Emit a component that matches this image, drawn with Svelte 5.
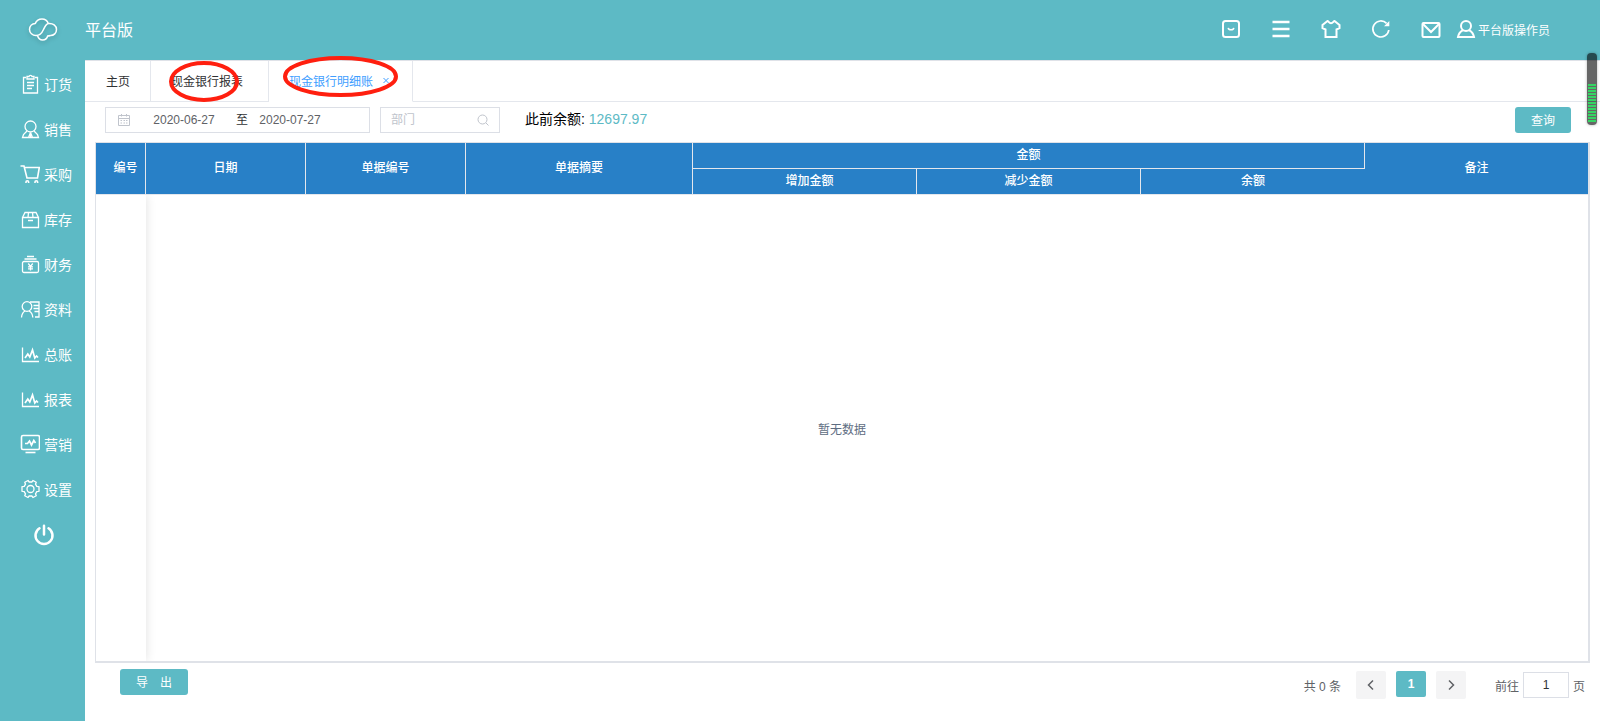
<script>
	const menu = [
		{ name: '订货', icon: 'order' },
		{ name: '销售', icon: 'sale' },
		{ name: '采购', icon: 'cart' },
		{ name: '库存', icon: 'stock' },
		{ name: '财务', icon: 'finance' },
		{ name: '资料', icon: 'profile' },
		{ name: '总账', icon: 'chart' },
		{ name: '报表', icon: 'chart' },
		{ name: '营销', icon: 'screen' },
		{ name: '设置', icon: 'gear' }
	]
	const bars = Array.from({ length: 13 }, (_, i) => i)

	let startDate = '2020-06-27'
	let endDate = '2020-07-27'
	let department = ''
	let page = '1'
</script>

<div class="app">
	<header>
		<a class="logo" href="/" aria-label="首页">
			<svg width="32" height="28" viewBox="0 0 32 28">
				<path d="M9 20.500C5.500 20.500 2.500 18 2.500 14.500S5 8.600 8.300 8.400C9.500 5.500 12 4 15 4s5.300 1.700 6.300 4.500C26 8 29.500 10.500 29.500 14.500c0 3.600-2.700 6-6 6M9 20.500c4.500 0 6-2.500 7.500-6s2.300-5.200 4.800-6M10.500 20.500c.8 2.800 2.700 4.500 5.200 4.500 2.600 0 4.300-1.700 5-4 1 0 1.800-.2 2.800-.5" />
			</svg>
		</a>
		<span class="brand">平台版</span>
		<div class="tools">
			<button aria-label="商城">
				<svg width="20" height="20" viewBox="0 0 20 20">
					<rect x="2" y="2" width="16" height="16" rx="2.500" />
					<path d="M7.200 8.800c.4 2.600 5.200 2.600 5.600 0" stroke-width="1.500" />
				</svg>
			</button>
			<button aria-label="菜单">
				<svg width="20" height="20" viewBox="0 0 20 20">
					<path d="M1.500 3h17M1.500 10h17M1.500 17h17" stroke-width="2.500" />
				</svg>
			</button>
			<button aria-label="主题">
				<svg width="20" height="20" viewBox="0 0 20 20">
					<path d="M6.500 2 1.500 6v3.200l3 1.300V18h11v-7.500l3-1.300V6l-5-4C12.500 2 12 4.200 10 4.200S7.500 2 6.500 2z" />
				</svg>
			</button>
			<button aria-label="刷新">
				<svg width="20" height="20" viewBox="0 0 20 20">
					<path d="M17.800 11a8 8 0 1 1-2.200-6.600" stroke-width="1.700" />
					<path d="M18.300 2v5.300h-5.300z" fill="#fff" stroke="none" />
				</svg>
			</button>
			<button aria-label="消息">
				<svg width="20" height="20" viewBox="0 0 20 20">
					<rect x="1.500" y="4" width="17" height="14" rx="1" />
					<path d="m2 5 8 8 8-8" />
				</svg>
			</button>
		</div>
		<a class="user" href="/user">
			<svg width="20" height="20" viewBox="0 0 20 20">
				<circle cx="10" cy="7" r="5" />
				<path d="M7.200 11.200C4.500 12.500 2.500 15 2 18h16c-.5-3-2.500-5.500-5.200-6.800" />
			</svg>
			平台版操作员
		</a>
	</header>

	<div class="body">
		<nav class="side">
			{#each menu as item}
				<a href="/{item.icon}">
					<svg width="20" height="20" viewBox="0 0 20 20">
						{#if item.icon === 'order'}
							<path d="M6 3.500H3.500V19h14V3.500H15M7 2.500h2c.3-1.500 2.700-1.500 3 0h2v2.500H7zM7 8.500h7M7 11.500h7M7 14.500h5" />
						{:else if item.icon === 'sale'}
							<circle cx="10.500" cy="7.500" r="5.500" />
							<path d="M7 12 3.500 15.500l-1 3h16l-1-3L14 12M10.500 13.500l-2 5M10.500 13.500l2 5M10.500 13.500v5" />
						{:else if item.icon === 'cart'}
							<path d="M.5 2H4l3 12h10.500L19.300 3.500H4.500" stroke-width="1.600" />
							<path d="M6 19v-1a1.300 1.300 0 0 1 2.600 0v1M15 19v-1a1.300 1.300 0 0 1 2.600 0v1" stroke-width="1.600" />
						{:else if item.icon === 'stock'}
							<path d="M2.500 8.500h16V18.500h-16zM2.500 8.500 5 3.500h11l2.500 5M8.500 3.500l-.5 5M12.500 3.500l.5 5M8 11.500h5" />
						{:else if item.icon === 'finance'}
							<rect x="2.500" y="7.500" width="16" height="11" rx="1.500" />
							<path d="M4.500 5h12M7 2.500h7M8.300 9.500l2.200 3 2.200-3M10.500 12.500v4M8 12.800h5M8 14.800h5" />
						{:else if item.icon === 'profile'}
							<circle cx="7" cy="7.500" r="4.800" />
							<path d="M1.500 18.500c.3-3.500 1.500-5.500 3.700-6.500M9 12c2.200 1 3.500 3 3.800 6.500M10 3h9v15h-4M13.500 6.500H19M13.500 9.500H19M14.500 12.500H19" />
						{:else if item.icon === 'chart'}
							<path d="M2.500 3.500V17.500h16.500" />
							<path d="M5 14l2.800-4 2 3 2.700-7 2.300 8 1.700-2 1.500 1.500" stroke-width="1.700" />
						{:else if item.icon === 'screen'}
							<rect x="1.500" y="1.500" width="18" height="14" rx="1.500" stroke-width="1.600" />
							<path d="M5.500 18.500h10" stroke-width="1.600" />
							<path d="M5 9.500h2.500L9.500 7l2 4 2.300-4.500L15.500 9" stroke-width="1.700" />
						{:else}
							<circle cx="10.500" cy="10" r="3.500" />
							<path d="M8 1.500 9.200 3h2.600L13 1.500l3.200 1.800-.7 1.900 1.300 2.200 2.200.3v4.600l-2.200.3-1.300 2.200.7 1.900-3.200 1.800-1.200-1.500H9.200L8 18.500l-3.200-1.800.7-1.900-1.300-2.200-2.200-.3V7.700l2.200-.3 1.300-2.200-.7-1.900z" />
						{/if}
					</svg>
					{item.name}
				</a>
			{/each}
			<button class="power" aria-label="退出">
				<svg width="22" height="22" viewBox="0 0 22 22">
					<path d="M6.500 4.300a8.500 8.500 0 1 0 9 0M11 1.800v8.700" />
				</svg>
			</button>
		</nav>

		<main>
			<div class="tabs">
				<a class="tab" href="/home">主页</a>
				<a class="tab report" href="/report">
					现金银行报表
					<svg class="mark" width="70" height="41" viewBox="0 0 70 41">
						<ellipse cx="35" cy="20.500" rx="33" ry="18.500" />
					</svg>
				</a>
				<a class="tab active" href="/detail">
					现金银行明细账
					<svg class="close" width="12" height="12" viewBox="0 0 12 12">
						<path d="m3.500 4 5 5M8.500 4l-5 5" />
					</svg>
					<svg class="mark" width="115" height="41" viewBox="0 0 115 41">
						<ellipse cx="57.500" cy="20.500" rx="55.500" ry="18.500" />
					</svg>
				</a>
				<div class="rest"></div>
			</div>

			<form class="filters">
				<div class="range">
					<svg width="12" height="12" viewBox="0 0 12 12">
						<path d="M.5 1.500h11v10H.5zM.5 4.500h11M3.500 0v2.500M8.500 0v2.500M2.500 6.500h1.500M5.500 6.500h1.500M8 6.500h1.500M2.500 9h1.500M5.500 9h1.500M8 9h1.500" />
					</svg>
					<input aria-label="开始日期" bind:value={startDate} />
					<span>至</span>
					<input aria-label="结束日期" bind:value={endDate} />
				</div>
				<div class="dept">
					<input aria-label="部门" placeholder="部门" bind:value={department} />
					<svg width="12" height="12" viewBox="0 0 12 12">
						<circle cx="5.500" cy="5.500" r="4.500" />
						<path d="m9 9 2.500 2.500" />
					</svg>
				</div>
				<p>此前余额: <span>12697.97</span></p>
				<button type="button" class="btn">查询</button>
			</form>

			<section class="grid">
				<table>
					<colgroup>
						<col class="c-no" />
						<col class="c-mid" />
						<col class="c-mid" />
						<col class="c-memo" />
						<col />
						<col />
						<col />
						<col class="c-note" />
					</colgroup>
					<thead>
						<tr>
							<th rowspan="2" class="indent">编号</th>
							<th rowspan="2">日期</th>
							<th rowspan="2">单据编号</th>
							<th rowspan="2">单据摘要</th>
							<th colspan="3">金额</th>
							<th rowspan="2" class="last">备注</th>
						</tr>
						<tr>
							<th class="indent">增加金额</th>
							<th>减少金额</th>
							<th class="last">余额</th>
						</tr>
					</thead>
				</table>
				<div class="empty">
					<div class="fixed"></div>
					<p>暂无数据</p>
				</div>
			</section>

			<footer>
				<button class="btn export">导&emsp;出</button>
				<div class="pager">
					<span class="total">共 0 条</span>
					<button aria-label="上一页">
						<svg width="12" height="12" viewBox="0 0 12 12"><path d="M8 1.500 3.500 6 8 10.500" /></svg>
					</button>
					<button class="current">1</button>
					<button aria-label="下一页">
						<svg width="12" height="12" viewBox="0 0 12 12"><path d="M4 1.500 8.500 6 4 10.500" /></svg>
					</button>
					<label>前往 <input bind:value={page} /> 页</label>
				</div>
			</footer>
		</main>
	</div>

	<div class="meter">
		{#each bars as bar (bar)}
			<i></i>
		{/each}
	</div>
</div>

<style>
	:global(body) {
		margin: 0;
		font-family: 'Liberation Sans', 'Noto Sans CJK SC', sans-serif;
		font-size: 12px;
		color: #606266;
	}
	* {
		box-sizing: border-box;
	}
	a {
		color: inherit;
		text-decoration: none;
	}
	p {
		margin: 0;
	}
	button {
		padding: 0;
		border: 0;
		background: none;
		font: inherit;
		color: inherit;
		cursor: pointer;
	}
	input {
		min-width: 0;
		padding: 0;
		border: 0;
		outline: 0;
		background: none;
		font: inherit;
		color: #606266;
	}
	svg {
		display: block;
		flex: none;
		fill: none;
		stroke: currentColor;
	}
	.app {
		position: relative;
		display: flex;
		flex-direction: column;
		min-height: 100vh;
		background: #fff;
	}

	header {
		display: flex;
		align-items: center;
		height: 60px;
		padding: 0 50px 2px 0;
		background: #5dbac5;
		color: #fff;
	}
	.logo {
		display: flex;
		justify-content: center;
		width: 85px;
	}
	.logo svg {
		stroke-width: 1.5;
		filter: drop-shadow(0 2px 2px rgba(0, 0, 0, 0.2));
	}
	.brand {
		font-size: 16px;
	}
	.tools {
		display: flex;
		gap: 30px;
		margin-left: auto;
		margin-right: 15px;
	}
	.tools svg,
	.user svg {
		stroke-width: 2;
	}
	.user {
		display: flex;
		align-items: center;
		gap: 2px;
	}

	.body {
		display: flex;
		flex: 1;
	}
	.side {
		display: flex;
		flex: none;
		flex-direction: column;
		width: 85px;
		padding-top: 1px;
		background: #5dbac5;
		color: #fff;
		font-size: 14px;
	}
	.side a {
		display: flex;
		align-items: center;
		gap: 4px;
		height: 45px;
		padding-left: 20px;
	}
	.side svg {
		stroke-width: 1.3;
	}
	.power {
		display: flex;
		align-items: center;
		justify-content: center;
		height: 45px;
		padding-top: 2px;
		padding-left: 2px;
	}
	.side .power svg {
		stroke-width: 2.5;
		stroke-linecap: round;
	}

	main {
		display: flex;
		flex: 1;
		flex-direction: column;
		min-width: 0;
	}
	.tabs {
		display: flex;
		height: 42px;
		border-top: 1px solid #dfe2e8;
		color: #303133;
	}
	.tab {
		position: relative;
		display: flex;
		align-items: center;
		padding: 0 20px 2px;
		border-right: 1px solid #e4e7ed;
		border-bottom: 1px solid #e4e7ed;
	}
	.tab:first-child {
		padding-left: 21px;
	}
	.report {
		padding-right: 25px;
	}
	.active {
		gap: 7px;
		border-bottom-color: transparent;
		color: #409eff;
	}
	.mark {
		position: absolute;
		top: 0;
		left: 18px;
		z-index: 1;
		stroke: #ff1f0f;
		stroke-width: 4;
	}
	.active .mark {
		top: -5px;
		left: 14px;
	}
	.rest {
		flex: 1;
		border-bottom: 1px solid #e4e7ed;
	}

	.filters {
		display: flex;
		align-items: center;
		padding: 5px 29px 9px 20px;
	}
	.range,
	.dept {
		display: flex;
		align-items: center;
		height: 26px;
		border: 1px solid #dcdfe6;
		color: #c0c4cc;
	}
	.range {
		width: 265px;
		padding-left: 12px;
	}
	.range input {
		width: 84px;
		text-align: center;
	}
	.range svg {
		margin-right: 12px;
	}
	.range span {
		margin-left: 10px;
		line-height: 16px;
		color: #303133;
	}
	.dept {
		width: 120px;
		margin-left: 10px;
		padding: 0 10px;
	}
	.dept input {
		flex: 1;
	}
	.dept input::placeholder {
		color: #c0c4cc;
	}
	.filters p {
		margin-left: 25px;
		padding-bottom: 2px;
		font-size: 14px;
		line-height: 20px;
		color: #000;
	}
	.filters p span {
		color: #5dbac5;
	}
	.btn {
		height: 26px;
		padding: 0 16px 2px;
		border-radius: 3px;
		background: #5dbac5;
		color: #fff;
	}
	.filters .btn {
		margin-left: auto;
	}

	.grid {
		display: flex;
		flex: 1;
		flex-direction: column;
		margin: 0 10px;
		border: 1px solid #dfe2e8;
		border-width: 1px 2px 2px 1px;
	}
	table {
		width: 100%;
		table-layout: fixed;
		border-collapse: separate;
		border-spacing: 0;
		background: #2880c7;
		color: #fff;
	}
	th {
		height: 26px;
		padding: 0 0 2px;
		border-right: 1px solid #e4e7ed;
		border-bottom: 1px solid #e4e7ed;
		font-weight: 500;
		line-height: 18px;
	}
	th.indent {
		padding-left: 10px;
	}
	th.last {
		border-right: 0;
	}
	.c-no {
		width: 50px;
	}
	.c-mid {
		width: 160px;
	}
	.c-memo {
		width: 227px;
	}
	.c-note {
		width: 223px;
	}
	.empty {
		display: grid;
		flex: 1;
		align-items: center;
		justify-items: center;
		overflow: hidden;
		color: #5e6d82;
	}
	.empty > * {
		grid-area: 1 / 1;
	}
	.fixed {
		align-self: stretch;
		justify-self: start;
		width: 50px;
		box-shadow: 0 0 10px rgba(0, 0, 0, 0.12);
	}

	footer {
		display: flex;
		align-items: flex-start;
		justify-content: space-between;
		height: 58px;
		padding: 6px 15px 0 35px;
	}
	.pager {
		display: flex;
		align-items: center;
		gap: 10px;
		padding-top: 2px;
		color: #606266;
	}
	.total {
		margin-right: 5px;
	}
	.pager button {
		display: flex;
		align-items: center;
		justify-content: center;
		width: 30px;
		height: 28px;
		border-radius: 2px;
		background: #f4f4f5;
	}
	.pager button svg {
		stroke-width: 1.5;
	}
	.pager .current {
		align-self: flex-start;
		height: 26px;
		background: #5dbac5;
		color: #fff;
		font-weight: 700;
	}
	.pager label {
		display: flex;
		align-items: center;
		gap: 4px;
		margin-left: 19px;
	}
	.pager input {
		width: 46px;
		height: 26px;
		border: 1px solid #dcdfe6;
		text-align: center;
		color: #303133;
	}

	.meter {
		position: absolute;
		top: 53px;
		right: 3px;
		display: flex;
		flex-direction: column;
		justify-content: flex-end;
		gap: 1px;
		width: 10px;
		height: 72px;
		padding: 0 1px 3px;
		border-radius: 4px;
		background: rgba(0, 0, 0, 0.6);
		box-shadow: 0 0 3px rgba(0, 0, 0, 0.3);
	}
	.meter i {
		height: 2px;
		background: #35d463;
	}
</style>
